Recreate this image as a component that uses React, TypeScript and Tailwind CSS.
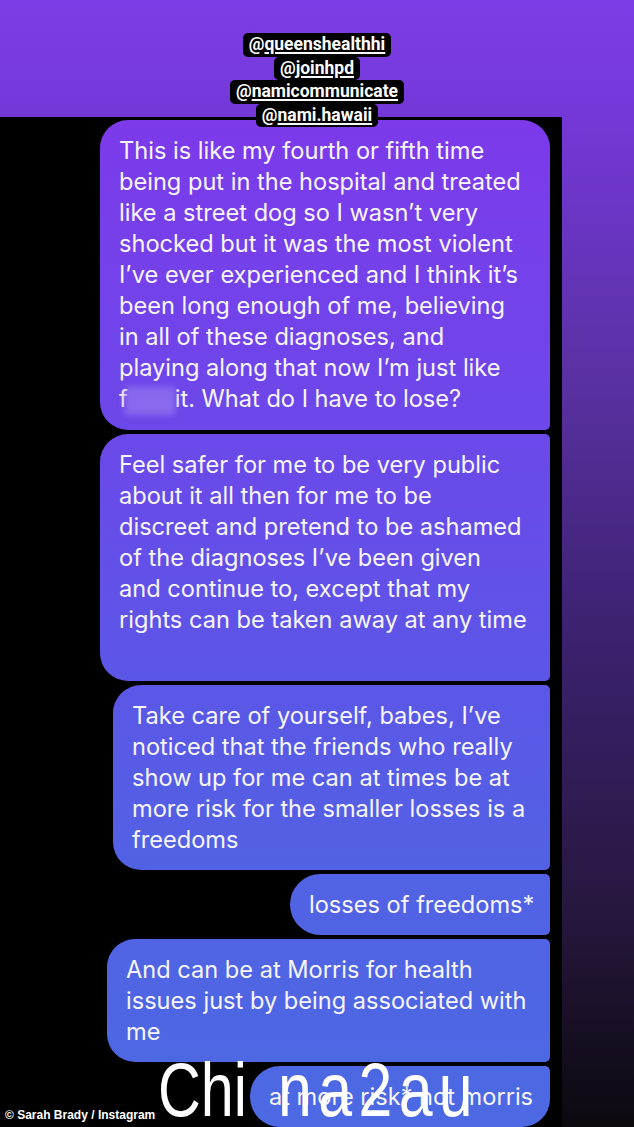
import * as React from 'react';

// tag stickers at the top of the story
const tags = ['queenshealthhi', 'joinhpd', 'namicommunicate', 'nami.hawaii'];

interface BubbleProps {
  lines: React.ReactNode[];
  className: string;
}

// each bubble uses the same viewport-fixed gradient, like the IG chat
const Bubble: React.FC<BubbleProps> = ({ lines, className }) => (
  <div
    className={`bg-fixed bg-[linear-gradient(180deg,#8236ea_0%,#7c3aea_11%,#6c48ea_38%,#5c56e7_60%,#5262e4_77%,#4c69e3_100%)] px-[19px] py-[15px] text-[23.6px] leading-[31px] text-[#f7f5fd] ${className}`}
  >
    {lines.map((l, i) => (
      <div key={i} className="whitespace-nowrap">
        {l === '' ? '\u00a0' : l}
      </div>
    ))}
  </div>
);

export default function App() {
  return (
    <div
      className="relative flex h-[1127px] w-[634px] flex-col overflow-hidden bg-[linear-gradient(180deg,#7d3de6_0%,#7438d8_10%,#58309f_35%,#3d2272_55%,#271840_80%,#0c080e_100%)]"
      style={{ fontFamily: 'Inter, "Open Sans", sans-serif' }}
    >
      {/* mention stickers */}
      <div
        className="relative z-10 -mb-[10px] flex flex-col items-center pt-[33px] text-[17.5px] font-bold leading-[23.5px] text-white"
        style={{ fontFamily: 'Roboto, "Liberation Sans", sans-serif' }}
      >
        {tags.map((t) => (
          <span key={t} className="rounded-[5px] bg-black px-[6px]">
            @<span className="underline decoration-[1.5px] underline-offset-[2px]">{t}</span>
          </span>
        ))}
      </div>

      {/* screenshot of the chat */}
      <div className="flex w-[562px] flex-1 flex-col items-end gap-[4px] bg-black pr-[12px] pt-[3px]">
        <Bubble
          className="w-[450px] rounded-[28px] rounded-br-[5px]"
          lines={[
            'This is like my fourth or fifth time',
            'being put in the hospital and treated',
            'like a street dog so I wasn\u2019t very',
            'shocked but it was the most violent',
            'I\u2019ve ever experienced and I think it\u2019s',
            'been long enough of me, believing',
            'in all of these diagnoses, and',
            'playing along that now I\u2019m just like',
            <>
              f
              <span className="-ml-[3px] inline-block h-[28px] w-[50px] bg-[#9479f0]/70 align-middle blur-[3px]" />
              it. What do I have to lose?
            </>,
          ]}
        />
        <Bubble
          className="w-[450px] rounded-l-[28px] rounded-r-[5px]"
          lines={[
            'Feel safer for me to be very public',
            'about it all then for me to be',
            'discreet and pretend to be ashamed',
            'of the diagnoses I\u2019ve been given',
            'and continue to, except that my',
            'rights can be taken away at any time',
            '',
          ]}
        />
        <Bubble
          className="w-[437px] rounded-l-[28px] rounded-r-[5px]"
          lines={[
            'Take care of yourself, babes, I\u2019ve',
            'noticed that the friends who really',
            'show up for me can at times be at',
            'more risk for the smaller losses is a',
            'freedoms',
          ]}
        />
        <Bubble className="w-[260px] rounded-l-[31px] rounded-r-[5px]" lines={['losses of freedoms*']} />
        <Bubble
          className="w-[443px] rounded-l-[28px] rounded-r-[5px]"
          lines={['And can be at Morris for health', 'issues just by being associated with', 'me']}
        />
        <Bubble
          className="w-[300px] rounded-l-[30px] rounded-tr-[5px] rounded-br-[28px]"
          lines={['at more risk* not morris']}
        />
      </div>

      {/* credit + site watermark sit over the picture */}
      <div
        className="absolute bottom-[3px] left-[5px] text-[12px] font-bold text-white"
        style={{ fontFamily: '"Liberation Sans", Arial, sans-serif' }}
      >
        © Sarah Brady / Instagram
      </div>
      <div
        className="absolute left-[158px] top-[1052px] flex text-[76px] leading-none text-white"
        style={{ fontFamily: '"Liberation Sans", Arial, sans-serif' }}
      >
        <span className="inline-block origin-left scale-x-[0.78]">Chi</span>
        <span className="ml-[6px] inline-block origin-left scale-x-[0.8] tracking-[8px]">na2au</span>
      </div>
    </div>
  );
}
